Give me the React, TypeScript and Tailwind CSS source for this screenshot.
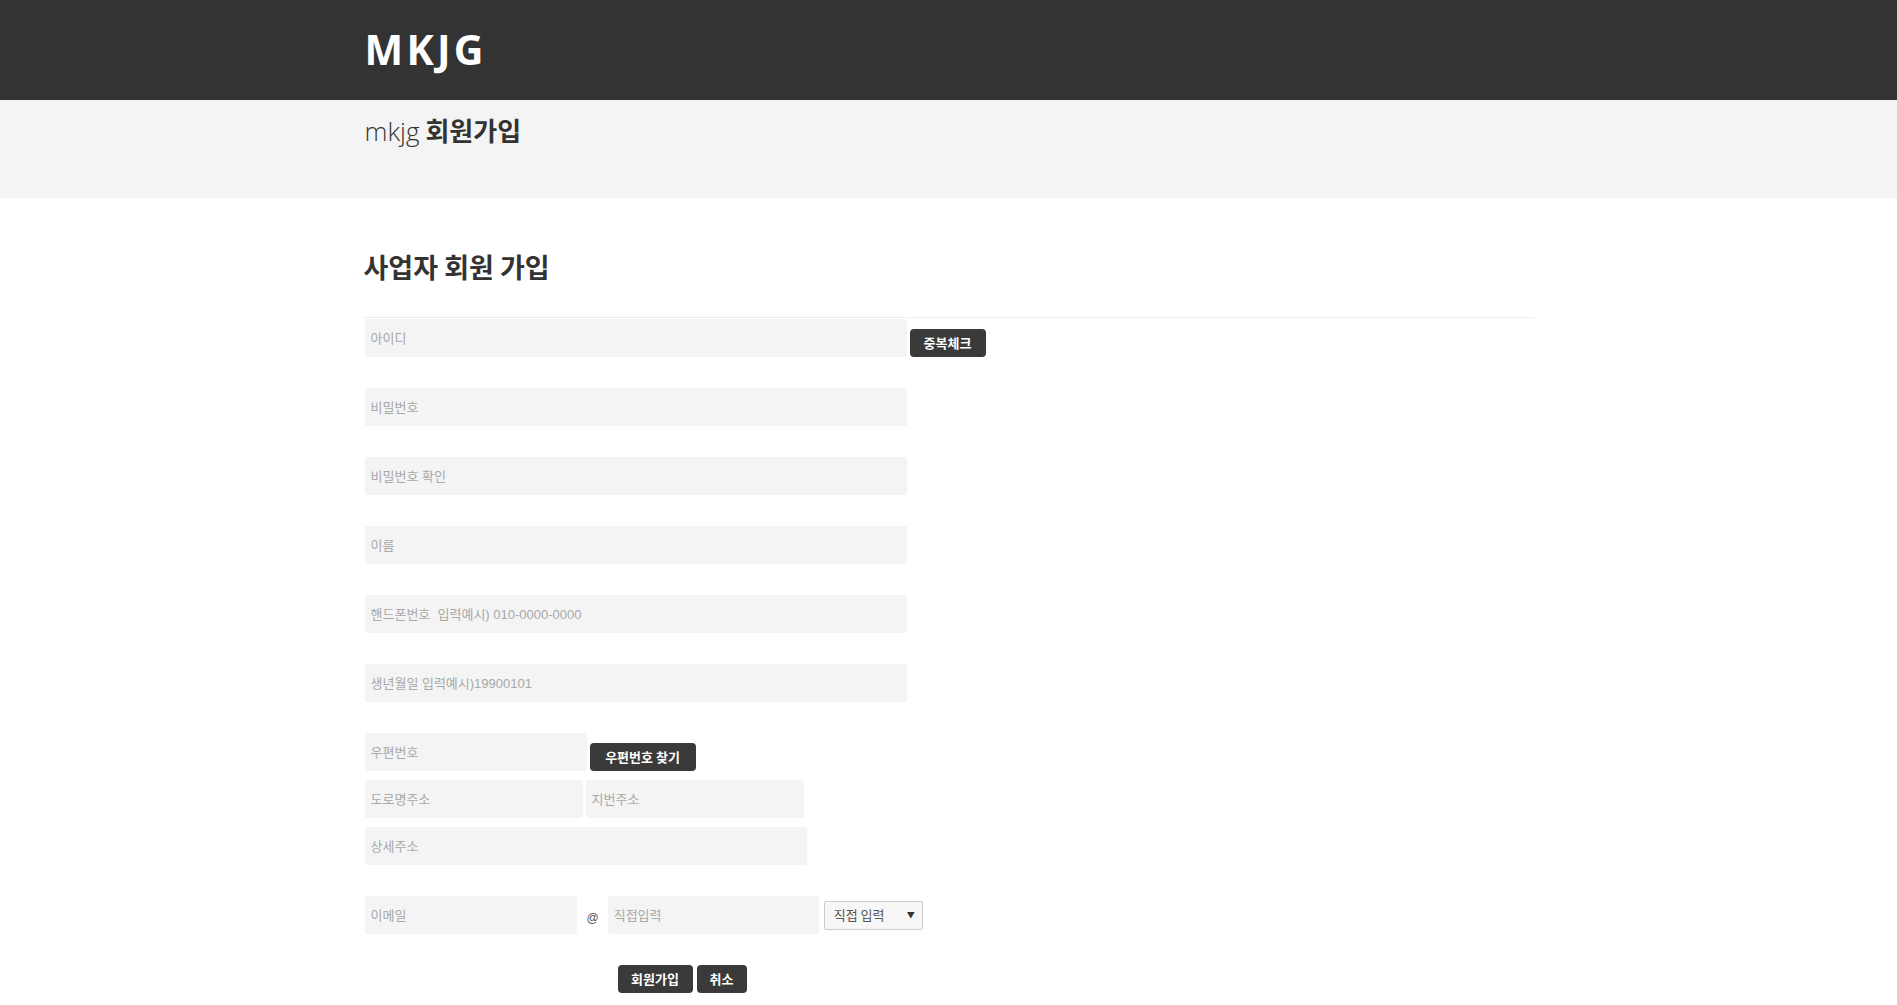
import React from "react";

const ko = { fontFamily: '"Noto Sans CJK KR", "Liberation Sans", sans-serif' };
const ph = { fontFamily: '"Liberation Sans", "Noto Sans CJK KR", sans-serif' };

function Field({ placeholder, width }: { placeholder: string; width: string }) {
  return (
    <input
      type="text"
      placeholder={placeholder}
      style={ph}
      className={`${width} h-[38px] bg-[#f4f4f4] rounded-[3px] px-[6px] text-[13px] text-[#333] placeholder:text-[#a8a8a8] outline-none`}
    />
  );
}

function DarkButton({ label, width }: { label: string; width: string }) {
  return (
    <button
      type="button"
      style={ko}
      className={`${width} h-[28px] bg-[#3a3a3a] rounded-[4px] text-white text-[13px] font-bold flex items-center justify-center`}
    >
      {label}
    </button>
  );
}

export default function App() {
  return (
    <div className="min-h-screen bg-white text-[#333]">
      <header className="h-[100px] bg-[#333333]">
        <div className="w-[1170px] mx-auto pt-[29px] pl-px">
          <h1
            style={{ fontFamily: '"Open Sans", "Liberation Sans", sans-serif' }}
            className="text-white text-[41px] font-bold leading-none tracking-[0.08em]"
          >
            MKJG
          </h1>
        </div>
      </header>

      <div className="h-[98px] bg-[#f4f4f4]">
        <div className="w-[1170px] mx-auto pt-[17px] pl-px">
          <h2 className="leading-none flex items-baseline">
            <span
              style={{ fontFamily: '"Open Sans", "Liberation Sans", sans-serif' }}
              className="text-[26px] font-light"
            >
              mkjg
            </span>
            <span style={ko} className="text-[26px] font-bold ml-[6px]">
              회원가입
            </span>
          </h2>
        </div>
      </div>

      <main className="w-[1170px] mx-auto">
        <h3 style={ko} className="mt-[53px] text-[27px] font-bold leading-[32px]">
          사업자 회원 가입
        </h3>

        <div className="mt-[34px] border-t border-[#eeeeee] pt-[1px] pl-px">
          <div className="flex items-end gap-[3px]">
            <Field placeholder="아이디" width="w-[542px]" />
            <DarkButton label="중복체크" width="w-[76px]" />
          </div>

          <div className="mt-[31px]">
            <Field placeholder="비밀번호" width="w-[542px]" />
          </div>
          <div className="mt-[31px]">
            <Field placeholder="비밀번호 확인" width="w-[542px]" />
          </div>
          <div className="mt-[31px]">
            <Field placeholder="이름" width="w-[542px]" />
          </div>
          <div className="mt-[31px]">
            <Field placeholder="핸드폰번호  입력예시) 010-0000-0000" width="w-[542px]" />
          </div>
          <div className="mt-[31px]">
            <Field placeholder="생년월일 입력예시)19900101" width="w-[542px]" />
          </div>

          <div className="mt-[31px] flex items-end gap-[3px]">
            <Field placeholder="우편번호" width="w-[222px]" />
            <DarkButton label="우편번호 찾기" width="w-[106px]" />
          </div>
          <div className="mt-[9px] flex gap-[3px]">
            <Field placeholder="도로명주소" width="w-[218px]" />
            <Field placeholder="지번주소" width="w-[218px]" />
          </div>
          <div className="mt-[9px]">
            <Field placeholder="상세주소" width="w-[442px]" />
          </div>

          <div className="mt-[31px] flex items-center">
            <Field placeholder="이메일" width="w-[212px]" />
            <span style={ph} className="ml-[10px] mt-[6px] text-[12px] text-[#555]">
              @
            </span>
            <div className="ml-[9px]">
              <Field placeholder="직접입력" width="w-[211px]" />
            </div>
            <div
              style={ko}
              className="ml-[5px] w-[99px] h-[29px] border border-[#cccccc] bg-[#f7f7f7] rounded-[2px] flex items-center justify-between pl-[9px] pr-[7px] text-[13px] text-[#555]"
            >
              <span>직접 입력</span>
              <span className="text-[8px] text-[#333]">▼</span>
            </div>
          </div>

          <div className="mt-[31px] ml-[253px] flex gap-[4px] pb-[12px]">
            <DarkButton label="회원가입" width="w-[75px]" />
            <DarkButton label="취소" width="w-[50px]" />
          </div>
        </div>
      </main>
    </div>
  );
}
